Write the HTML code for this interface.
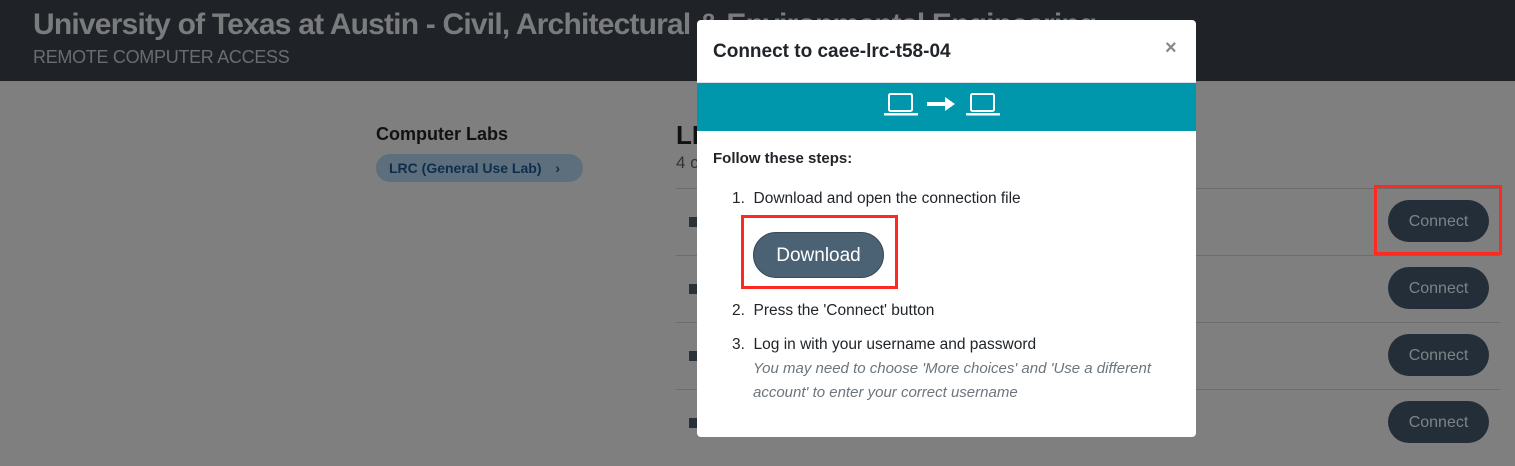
<!DOCTYPE html>
<html><head><meta charset="utf-8"><style>
*{margin:0;padding:0;box-sizing:border-box}
body{width:1515px;height:466px;overflow:hidden;background:#7f7f7f;font-family:"Liberation Sans",sans-serif;position:relative}
.hdr{position:absolute;left:0;top:0;width:1515px;height:81px;background:#1f2328}
.t1{position:absolute;left:33px;top:8px;font-size:30px;font-weight:bold;color:#7a7b7d;white-space:nowrap;letter-spacing:-0.8px}
.t2{position:absolute;left:33px;top:47px;font-size:18px;color:#6a6c6f;white-space:nowrap;letter-spacing:-0.3px}
.abs{position:absolute;white-space:nowrap}
.line{position:absolute;left:676px;width:824px;height:1px;background:#6c6c6c}
.cb{position:absolute;left:1388px;width:101px;height:42px;border-radius:21px;background:#232e38;color:#7d8388;font-size:16px;text-align:center;line-height:44px}
.ic{position:absolute;left:689px;width:8px;height:10px;background:#2a3138}
.modal{position:absolute;left:697px;top:20px;width:499px;height:417px;background:#fff;border-radius:4px}
.red{position:absolute;border:3px solid #ff2a1f}
</style></head><body>
<div class="hdr"><div class="t1">University of Texas at Austin - Civil, Architectural &amp; Environmental Engineering</div><div class="t2">REMOTE COMPUTER ACCESS</div></div>
<div class="abs" style="left:376px;top:124px;font-size:18px;font-weight:bold;color:#111">Computer Labs</div>
<div class="abs" style="left:376px;top:154px;width:207px;height:28px;border-radius:14px;background:#5d6f7c;color:#0e2d4d;font-size:14px;font-weight:bold;line-height:28px;padding-left:13px">LRC (General Use Lab) <span style="margin-left:10px">›</span></div>
<div class="abs" style="left:676px;top:120px;font-size:26px;font-weight:bold;color:#111">LRC</div>
<div class="abs" style="left:676px;top:153px;font-size:17px;color:#333">4 computers</div>
<div class="line" style="top:188px"></div><div class="line" style="top:255px"></div><div class="line" style="top:322px"></div><div class="line" style="top:389px"></div>
<div class="ic" style="top:217px"></div><div class="ic" style="top:284px"></div><div class="ic" style="top:351px"></div><div class="ic" style="top:418px"></div>
<div class="cb" style="top:200px">Connect</div><div class="cb" style="top:267px">Connect</div><div class="cb" style="top:334px">Connect</div><div class="cb" style="top:401px">Connect</div>
<div class="red" style="left:1374px;top:185px;width:128px;height:70px"></div>
<div class="modal">
 <div class="abs" style="left:16px;top:21px;font-size:19px;font-weight:bold;color:#212529">Connect to caee-lrc-t58-04</div>
 <div class="abs" style="left:468px;top:17px;font-size:20px;font-weight:bold;color:#888">×</div>
 <div class="abs" style="left:0;top:62px;width:499px;height:1px;background:#dee2e6"></div>
 <div class="abs" style="left:0;top:63px;width:499px;height:48px;background:#0097ad">
  <svg width="499" height="48" style="position:absolute;left:0;top:0"><g fill="none" stroke="#fff" stroke-width="2"><rect x="192" y="11" width="23" height="17" rx="1.5"/><rect x="274" y="11" width="23" height="17" rx="1.5"/></g><g fill="#fff"><rect x="187" y="30" width="34" height="2.5"/><rect x="269" y="30" width="34" height="2.5"/><rect x="230" y="19" width="19" height="4"/><polygon points="248,14 258,21 248,28"/></g></svg>
 </div>
 <div class="abs" style="left:16px;top:130px;font-size:15px;font-weight:bold;color:#212529">Follow these steps:</div>
 <div class="abs" style="left:35px;top:170px;font-size:15.5px;color:#212529">1.&nbsp;&nbsp;Download and open the connection file</div>
 <div class="abs" style="left:56px;top:212px;width:131px;height:46px;border-radius:23px;background:#4b6274;border:1px solid #3a4a56;color:#fff;font-size:19px;text-align:center;line-height:46px">Download</div>
 <div class="red" style="left:44px;top:195px;width:157px;height:74px"></div>
 <div class="abs" style="left:35px;top:282px;font-size:15.5px;color:#212529">2.&nbsp;&nbsp;Press the 'Connect' button</div>
 <div class="abs" style="left:35px;top:316px;font-size:15.5px;color:#212529">3.&nbsp;&nbsp;Log in with your username and password</div>
 <div class="abs" style="left:56px;top:337px;font-size:15px;font-style:italic;color:#6c757d;line-height:24px">You may need to choose 'More choices' and 'Use a different<br>account' to enter your correct username</div>
</div>
</body></html>
